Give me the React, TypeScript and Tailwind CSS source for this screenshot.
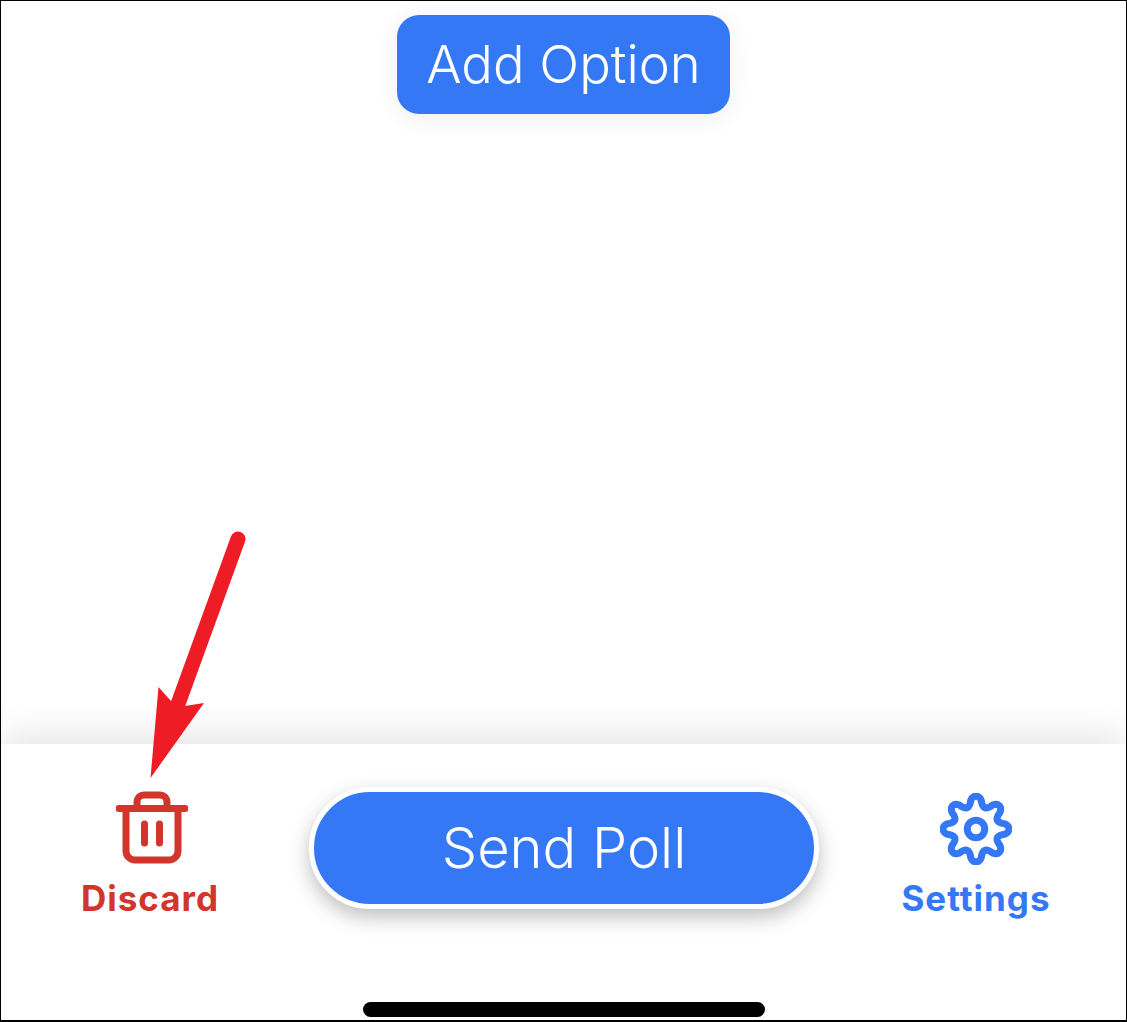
const gearPath = () => {
  const points: string[] = [];
  for (let i = 0; i < 240; i++) {
    const angle = (i / 240) * Math.PI * 2;
    const wave = Math.cos(8 * angle);
    const radius = 28 + 5 * Math.sign(wave) * Math.pow(Math.abs(wave), 0.7);
    const x = 36 + radius * Math.cos(angle);
    const y = 36 + radius * Math.sin(angle);
    points.push(`${i === 0 ? 'M' : 'L'}${x.toFixed(2)} ${y.toFixed(2)}`);
  }
  return `${points.join(' ')} Z`;
};

function TrashIcon() {
  return (
    <svg width="72" height="76" viewBox="0 0 72 76" fill="none" stroke="#d2352b" strokeLinecap="round" strokeLinejoin="round" className="ml-[4px] block">
      <path d="M3 17.500 H69" strokeWidth="7" />
      <path d="M21 15 V11 A7 7 0 0 1 28 4 H44 A7 7 0 0 1 51 11 V15" strokeWidth="7" />
      <path d="M10 18 V60 A9 9 0 0 0 19 69 H53 A9 9 0 0 0 62 60 V18" strokeWidth="7" />
      <path d="M28.500 33 V52 M43.500 33 V52" strokeWidth="7" />
    </svg>
  );
}

function GearIcon() {
  return (
    <svg width="72" height="72" viewBox="0 0 72 72" fill="none" stroke="#3478f6" className="block">
      <path d={gearPath()} strokeWidth="7" strokeLinejoin="round" />
      <circle cx="36" cy="36" r="8.750" strokeWidth="7" />
    </svg>
  );
}

function RedArrow() {
  return (
    <svg width="140" height="270" viewBox="0 0 140 270" className="pointer-events-none absolute left-[130px] top-[520px]">
      <path d="M107 18 L43 194" stroke="#ee1c25" strokeWidth="15" strokeLinecap="round" fill="none" />
      <path d="M19.500 257 L27.500 166 L40 180 L54 185 L73 182 Z" fill="#ee1c25" />
    </svg>
  );
}

export default function App() {
  return (
    <div className="relative flex h-[1022px] w-[1127px] flex-col overflow-hidden border border-b-2 border-black bg-white font-['Inter','Liberation_Sans',sans-serif]">
      <main className="flex flex-1 justify-center pt-[14px]">
        <button
          type="button"
          className="h-[99px] w-[333px] rounded-[22px] bg-[#3478f6] text-[52.500px] font-light text-white shadow-[0_4px_24px_rgba(0,0,0,0.07)]"
        >
          Add Option
        </button>
      </main>

      <footer className="flex h-[276px] flex-col bg-white shadow-[0_-6px_36px_rgba(0,0,0,0.12)]">
        <div className="flex flex-1 items-start">
          <div className="flex w-[298px] flex-col items-center pt-[47px]">
            <TrashIcon />
            <span className="mt-[9px] text-[35px] leading-[44px] font-bold tracking-[1px] text-[#d2352b]">Discard</span>
          </div>
          <button
            type="button"
            className="mt-[43px] ml-[10px] h-[122px] w-[510px] rounded-full border-[5px] border-white bg-[#3478f6] text-[56px] font-light text-white shadow-[0_8px_20px_rgba(0,0,0,0.26)]"
          >
            Send Poll
          </button>
          <div className="ml-[7px] flex w-[300px] flex-col items-center pt-[49px]">
            <GearIcon />
            <span className="mt-[11px] text-[35px] leading-[44px] font-bold tracking-[1px] text-[#3478f6]">Settings</span>
          </div>
        </div>
        <div className="mx-auto mb-[3px] h-[15px] w-[402px] rounded-full bg-black" />
      </footer>

      <RedArrow />
    </div>
  );
}
